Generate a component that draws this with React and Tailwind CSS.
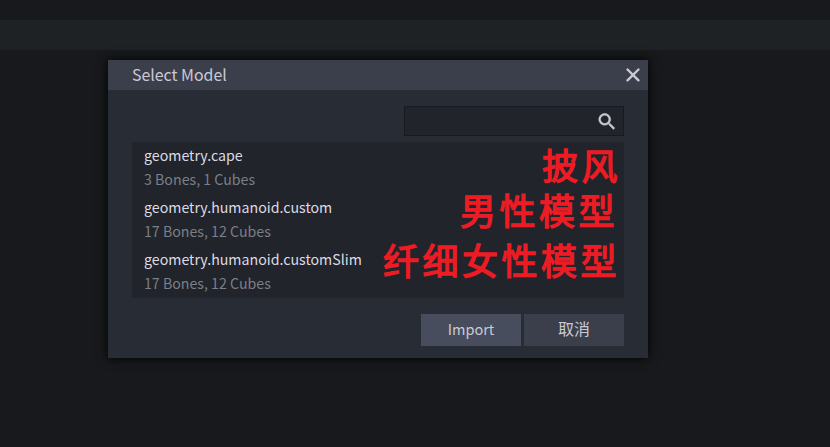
import React from "react";

const models = [
  { name: "geometry.cape", info: "3 Bones, 1 Cubes" },
  { name: "geometry.humanoid.custom", info: "17 Bones, 12 Cubes" },
  { name: "geometry.humanoid.customSlim", info: "17 Bones, 12 Cubes" },
];

function CloseIcon() {
  return (
    <svg width="22" height="22" viewBox="0 0 22 22" fill="none" stroke="#cacad4" strokeWidth="2.4" strokeLinecap="round">
      <path d="M5.5 5.5 16.5 16.3M16.5 5.5 5.5 16.3" />
    </svg>
  );
}

function SearchIcon() {
  return (
    <svg width="22" height="22" viewBox="0 -0.7 24 24" fill="#cacad4" stroke="#cacad4" strokeWidth="0.5">
      <path d="M15.5 14h-.79l-.28-.27C15.41 12.59 16 11.11 16 9.5 16 5.91 13.09 3 9.5 3S3 5.91 3 9.5 5.91 16 9.5 16c1.61 0 3.09-.59 4.23-1.57l.27.28v.79l5 4.99L20.49 19l-4.99-5zm-6 0C7.01 14 5 11.99 5 9.5S7.01 5 9.5 5 14 7.01 14 9.5 11.99 14 9.5 14z" />
    </svg>
  );
}

function Note({ className, children }) {
  return (
    <span
      className={`absolute whitespace-nowrap text-[36px] leading-[40px] tracking-[3.5px] text-[#ed1c24] [-webkit-text-stroke:1.3px_#ed1c24] ${className}`}
    >
      {children}
    </span>
  );
}

export default function App() {
  return (
    <div className="h-[447px] w-[830px] overflow-hidden bg-[#18191c] pt-5 font-['Noto_Sans_CJK_SC',sans-serif] text-[#cacad4]">
      <div className="h-[30px] bg-[#1e2225]" />
      <div className="relative mt-2.5 ml-[108px] h-[298px] w-[540px] bg-[#282c34] shadow-[0_0_10px_#000000]">
        <div className="flex h-[30px] items-center justify-between bg-[#3b3f4b] pr-1 pl-6">
          <span className="text-[15.9px] leading-[28px]">Select Model</span>
          <CloseIcon />
        </div>
        <div className="px-6 pt-4">
          <div className="ml-auto flex h-[30px] w-[220px] items-center justify-end border border-[#181a1f] bg-[#21252b] pr-[5px]">
            <SearchIcon />
          </div>
          <ul className="mt-1.5 h-[156px] bg-[#21242b] px-3">
            {models.map((m) => (
              <li key={m.name} className="h-[52px] text-[14.2px]">
                <div className="h-[26px] leading-[27px] text-[#dcdce4]">{m.name}</div>
                <div className="h-[26px] leading-[23px] text-[#7b7f86]">{m.info}</div>
              </li>
            ))}
          </ul>
          <div className="mt-4 flex justify-end gap-[3px]">
            <button className="h-8 w-[100px] bg-[#474d5d] pb-0.5 text-[14.5px]">Import</button>
            <button className="h-8 w-[100px] bg-[#3a3f4b] pb-1 text-[16px]">取消</button>
          </div>
        </div>
        <Note className="top-[84px] left-[434px]">披风</Note>
        <Note className="top-[129px] left-[352px]">男性模型</Note>
        <Note className="top-[179px] left-[275px]">纤细女性模型</Note>
      </div>
    </div>
  );
}
